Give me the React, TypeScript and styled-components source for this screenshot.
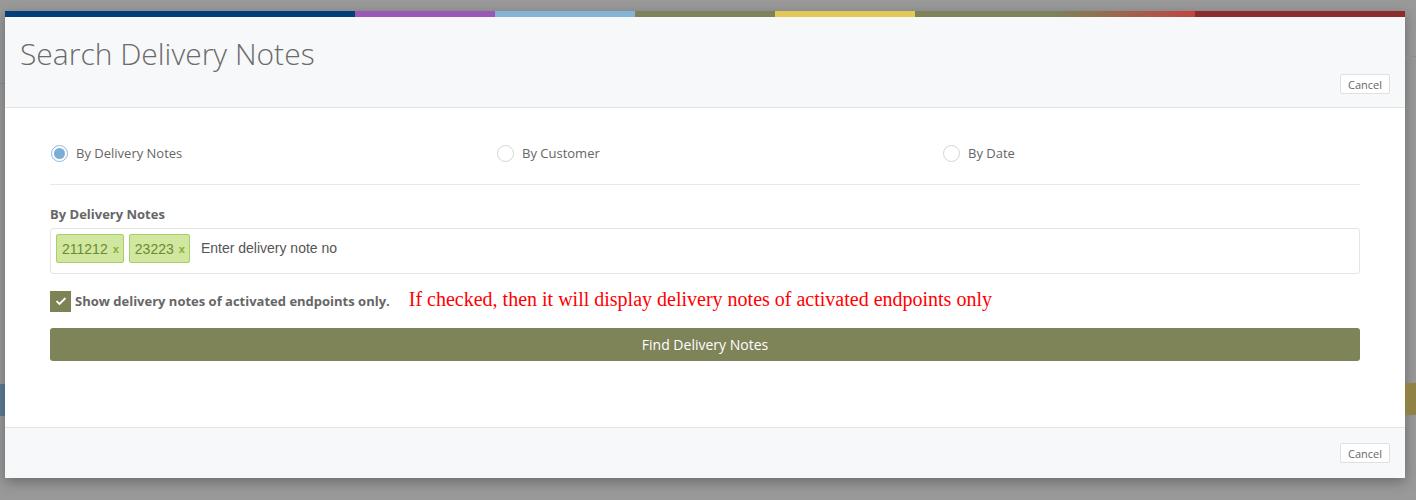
import styled, { createGlobalStyle } from "styled-components";

const GlobalStyle = createGlobalStyle`
  html, body {
    margin: 0;
    padding: 0;
    background: #999999;
  }
  * {
    box-sizing: border-box;
  }
`;

const stripeColors = [
  { color: "#03407a", width: 350 },
  { color: "#9b59b6", width: 140 },
  { color: "#85b3d6", width: 140 },
  { color: "#7d825a", width: 140 },
  { color: "#e2c955", width: 140 },
  { color: "#7d825a", width: 140 },
];

const Backdrop = styled.div`
  width: 1416px;
  height: 500px;
  display: grid;
  grid-template-columns: 5px 1400px 11px;
  overflow: hidden;
  font-family: "Open Sans", "Liberation Sans", sans-serif;
`;

const Edge = styled.div`
  display: flex;
  flex-direction: column;
`;

const EdgeBlock = styled.div<{ $top: number; $h: number; $bg: string }>`
  margin-top: ${(p) => p.$top}px;
  height: ${(p) => p.$h}px;
  background: ${(p) => p.$bg};
`;

const Modal = styled.div`
  margin-top: 11px;
  height: 467px;
  background: #fff;
  display: flex;
  flex-direction: column;
  box-shadow: 0 4px 12px rgba(0, 0, 0, 0.3);
`;

const Stripe = styled.div`
  display: flex;
  height: 6px;
  flex-shrink: 0;
`;

const StripePart = styled.div<{ $bg: string; $w?: number }>`
  background: ${(p) => p.$bg};
  width: ${(p) => (p.$w ? `${p.$w}px` : "auto")};
  flex: ${(p) => (p.$w ? "none" : "1")};
`;

const Header = styled.div`
  height: 91px;
  background: #f7f8fa;
  border-bottom: 1px solid #e3e3e3;
  padding: 0 15px 0 15px;
  display: flex;
  flex-direction: column;
`;

const Title = styled.h1`
  margin: 17px 0 0 0;
  font-weight: 300;
  font-size: 30px;
  line-height: 40px;
  color: #6b6b6b;
`;

const CancelButton = styled.button<{ $mt: number }>`
  align-self: flex-end;
  margin-top: ${(p) => p.$mt}px;
  height: 20px;
  padding: 0 7px;
  font-family: "Open Sans", sans-serif;
  font-size: 11px;
  color: #666;
  background: #fff;
  border: 1px solid #e0e0e0;
  border-radius: 2px;
`;

const Body = styled.div`
  flex: 1;
  padding: 36px 45px 0 45px;
`;

const RadioRow = styled.div`
  display: grid;
  grid-template-columns: 446px 446px 1fr;
  padding-bottom: 22px;
  border-bottom: 1px solid #e8e8e8;
`;

const RadioLabel = styled.label`
  display: flex;
  align-items: center;
  gap: 8px;
  font-size: 13px;
  color: #666;
  height: 18px;
`;

const RadioCircle = styled.span<{ $checked?: boolean }>`
  width: 17px;
  height: 17px;
  border-radius: 50%;
  border: 1px solid ${(p) => (p.$checked ? "#8fb8d9" : "#d4d4d4")};
  background: #fff;
  display: flex;
  align-items: center;
  justify-content: center;
  margin-left: 1px;

  &::after {
    content: "";
    display: ${(p) => (p.$checked ? "block" : "none")};
    width: 11px;
    height: 11px;
    border-radius: 50%;
    background: #7aaed6;
  }
`;

const FieldLabel = styled.div`
  margin-top: 20px;
  font-size: 13px;
  font-weight: 700;
  color: #666;
  line-height: 18px;
`;

const TagInput = styled.div`
  margin-top: 5px;
  height: 46px;
  border: 1px solid #e3e3e3;
  border-radius: 3px;
  display: flex;
  align-items: flex-start;
  gap: 5px;
  padding: 5px 5px 0 5px;
  font-family: "Liberation Sans", Arial, sans-serif;
`;

const Tag = styled.span`
  height: 29px;
  display: flex;
  align-items: center;
  gap: 5px;
  padding: 0 4px 0 5px;
  background: #d1e79f;
  border: 1px solid #a9cf6b;
  border-radius: 2px;
  color: #6b8a32;
  font-size: 14px;
`;

const TagClose = styled.span`
  font-size: 11px;
  font-weight: 700;
  color: #7fae3a;
`;

const Placeholder = styled.span`
  margin-left: 6px;
  font-size: 14px;
  line-height: 29px;
  color: #555;
`;

const CheckRow = styled.div`
  margin-top: 16px;
  display: flex;
  align-items: center;
  height: 22px;
`;

const CheckBox = styled.span`
  width: 21px;
  height: 21px;
  background: #7e8356;
  display: flex;
  align-items: center;
  justify-content: center;
`;

const CheckText = styled.span`
  margin-left: 4px;
  font-size: 13px;
  font-weight: 700;
  color: #666;
`;

const Note = styled.span`
  margin-left: 19px;
  margin-bottom: 4px;
  font-family: "Liberation Serif", "Times New Roman", serif;
  font-size: 20px;
  color: #ff0000;
`;

const FindButton = styled.button`
  margin-top: 16px;
  width: 100%;
  height: 33px;
  border: none;
  border-radius: 3px;
  background: #7e8358;
  color: #fff;
  font-family: "Open Sans", sans-serif;
  font-size: 14px;
`;

const Footer = styled.div`
  height: 51px;
  background: #f7f8fa;
  border-top: 1px solid #e3e3e3;
  padding: 0 15px;
  display: flex;
  flex-direction: column;
`;

export default function App() {
  return (
    <>
      <GlobalStyle />
      <Backdrop>
        <Edge>
          <EdgeBlock $top={83} $h={1} $bg="#8c8c8c" />
          <EdgeBlock $top={300} $h={32} $bg="#5b7b95" />
        </Edge>
        <Modal>
          <Stripe>
            {stripeColors.map((s, i) => (
              <StripePart key={i} $bg={s.color} $w={s.width} />
            ))}
            <StripePart $bg="linear-gradient(90deg, #7d825a 0%, #c14542 100%)" $w={140} />
            <StripePart $bg="#8c2c2c" />
          </Stripe>
          <Header>
            <Title>Search Delivery Notes</Title>
            <CancelButton $mt={0}>Cancel</CancelButton>
          </Header>
          <Body>
            <RadioRow>
              <RadioLabel>
                <RadioCircle $checked />
                By Delivery Notes
              </RadioLabel>
              <RadioLabel>
                <RadioCircle />
                By Customer
              </RadioLabel>
              <RadioLabel>
                <RadioCircle />
                By Date
              </RadioLabel>
            </RadioRow>
            <FieldLabel>By Delivery Notes</FieldLabel>
            <TagInput>
              <Tag>
                211212<TagClose>x</TagClose>
              </Tag>
              <Tag>
                23223<TagClose>x</TagClose>
              </Tag>
              <Placeholder>Enter delivery note no</Placeholder>
            </TagInput>
            <CheckRow>
              <CheckBox>
                <svg width="12" height="10" viewBox="0 0 12 10">
                  <path d="M1.5 5.2 L4.5 8 L10.5 2" fill="none" stroke="#fff" strokeWidth="1.8" />
                </svg>
              </CheckBox>
              <CheckText>Show delivery notes of activated endpoints only.</CheckText>
              <Note>If checked, then it will display delivery notes of activated endpoints only</Note>
            </CheckRow>
            <FindButton>Find Delivery Notes</FindButton>
          </Body>
          <Footer>
            <CancelButton $mt={15}>Cancel</CancelButton>
          </Footer>
        </Modal>
        <Edge>
          <EdgeBlock $top={56} $h={1} $bg="#8c8c8c" />
          <EdgeBlock $top={326} $h={32} $bg="#8f8244" />
        </Edge>
      </Backdrop>
    </>
  );
}
